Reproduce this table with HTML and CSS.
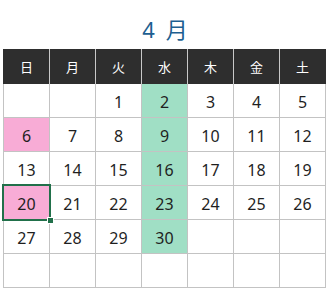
FILE: index.html
```html
<!DOCTYPE html>
<html lang="ja">
<head>
<meta charset="utf-8">
<link rel="stylesheet" href="styles.css">
</head>
<body>
<div class="title">4 月</div>
<div class="cal">
  <div class="head">
    <div class="hc">日</div><div class="hc">月</div><div class="hc">火</div><div class="hc">水</div><div class="hc">木</div><div class="hc">金</div><div class="hc">土</div>
  </div>
  <div class="body">
    <div class="c"></div><div class="c"></div><div class="c">1</div><div class="c wed">2</div><div class="c">3</div><div class="c">4</div><div class="c">5</div>
    <div class="c hol">6</div><div class="c">7</div><div class="c">8</div><div class="c wed">9</div><div class="c">10</div><div class="c">11</div><div class="c">12</div>
    <div class="c">13</div><div class="c">14</div><div class="c">15</div><div class="c wed">16</div><div class="c">17</div><div class="c">18</div><div class="c">19</div>
    <div class="c hol sel">20</div><div class="c">21</div><div class="c">22</div><div class="c wed">23</div><div class="c">24</div><div class="c">25</div><div class="c">26</div>
    <div class="c">27</div><div class="c">28</div><div class="c">29</div><div class="c wed">30</div><div class="c"></div><div class="c"></div><div class="c"></div>
    <div class="c"></div><div class="c"></div><div class="c"></div><div class="c"></div><div class="c"></div><div class="c"></div><div class="c"></div>
  </div>
</div>
</body>
</html>
```

FILE: styles.css
```css
html, body {
  margin: 0;
  padding: 0;
  background: #ffffff;
}
body {
  width: 330px;
  height: 291px;
  overflow: hidden;
  font-family: "Noto Sans", "Noto Sans CJK JP", sans-serif;
}
.title {
  box-sizing: border-box;
  height: 49px;
  padding-top: 14px;
  padding-left: 0;
  line-height: 30px;
  font-size: 22px;
  word-spacing: 5px;
  color: #1d5f91;
  text-align: center;
}
.cal {
  margin-left: 3px;
  width: 323px;
}
.head {
  display: grid;
  grid-template-columns: repeat(7, 45px);
  column-gap: 1px;
  height: 35px;
  background: #c9c9c9;
  border-left: 1px solid #2e2e2e;
  border-right: 1px solid #2e2e2e;
}
.hc {
  background: #2e2e2e;
  color: #ffffff;
  font-size: 13px;
  display: flex;
  align-items: center;
  justify-content: center;
}
.body {
  display: grid;
  grid-template-columns: repeat(7, 45px);
  grid-auto-rows: 33px;
  gap: 1px;
  padding: 0 1px 1px 1px;
  background: #c3c3c3;
}
.c {
  background: #ffffff;
  color: #1f1f1f;
  font-size: 16px;
  display: flex;
  align-items: center;
  justify-content: center;
  padding-top: 2px;
  box-sizing: border-box;
}
.wed {
  background: #a0dfc5;
}
.hol {
  background: #f8acd6;
}
.sel {
  position: relative;
  outline: 2px solid #21704a;
  outline-offset: 0;
}
.sel::after {
  content: "";
  position: absolute;
  right: -5px;
  bottom: -5px;
  width: 5px;
  height: 5px;
  background: #21704a;
  border: 1px solid #ffffff;
}
```
